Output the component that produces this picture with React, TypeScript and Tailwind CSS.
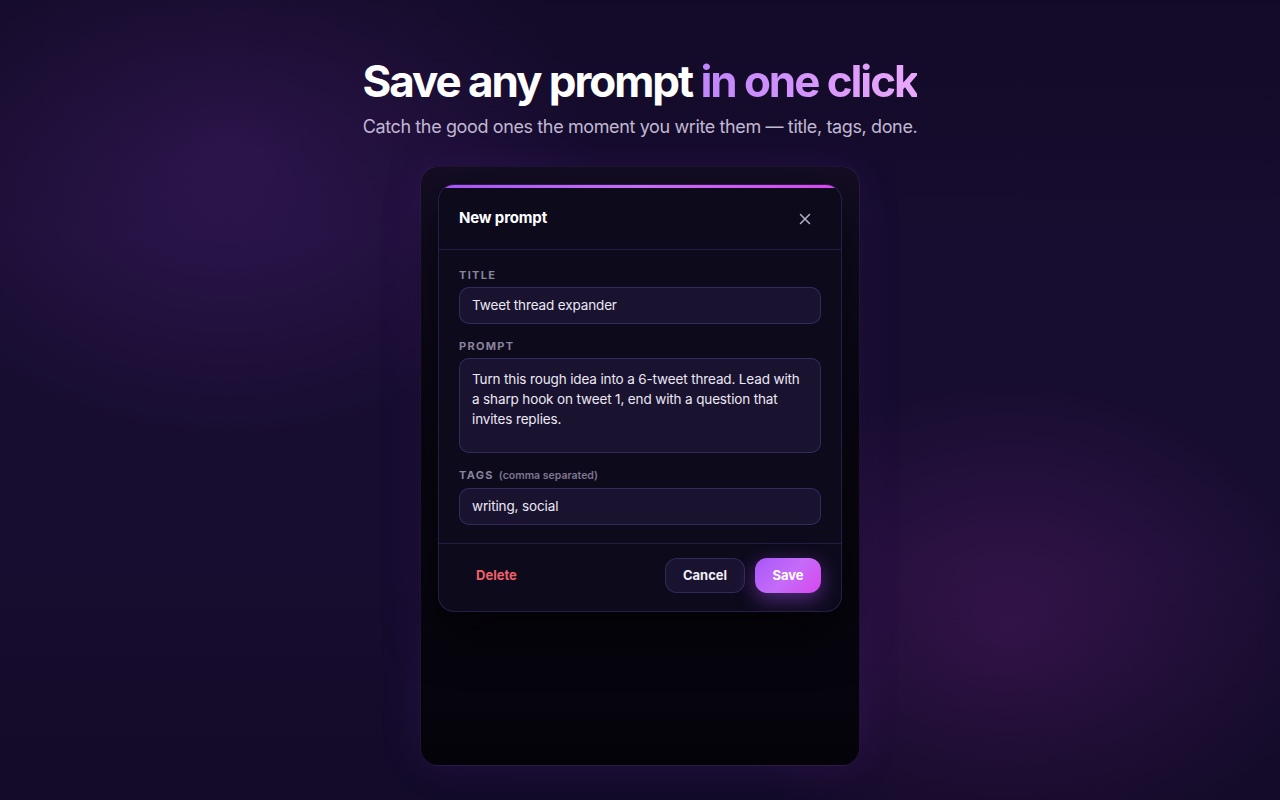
import React from "react";

export default function App() {
  return (
    <div
      className="relative w-full h-[800px] overflow-hidden flex flex-col items-center"
      style={{ fontFamily: "Inter, 'Noto Sans', sans-serif" }}
    >
      <div className="absolute inset-0 bg-[#170d30]" />
      <div className="absolute inset-0 bg-[radial-gradient(ellipse_520px_420px_at_230px_150px,rgba(70,30,110,0.55),transparent_70%)]" />
      <div className="absolute inset-0 bg-[radial-gradient(ellipse_440px_360px_at_1010px_630px,rgba(80,25,100,0.55),transparent_70%)]" />
      <div className="absolute inset-0 bg-[linear-gradient(180deg,rgba(10,6,24,0.35),transparent_30%,transparent_70%,rgba(10,6,24,0.3))]" />

      <div className="relative flex flex-col items-center pt-[56px]">
        <h1 className="text-[44px] leading-[50px] font-bold tracking-[-0.047em] text-white">
          Save any prompt{" "}
          <span className="bg-[linear-gradient(90deg,#c084fc,#e9a8fb)] bg-clip-text text-transparent">
            in one click
          </span>
        </h1>
        <p className="mt-[8px] text-[18px] leading-[26px] tracking-[-0.021em] text-[#c1b8d3]">
          Catch the good ones the moment you write them — title, tags, done.
        </p>

        <div className="mt-[26px] w-[440px] h-[600px] rounded-[18px] border border-[rgba(150,100,230,0.18)] bg-[linear-gradient(180deg,#140d24_0%,#0a0714_40%,#05030a_100%)] p-[17px] shadow-[0_0_40px_rgba(120,50,200,0.15)]">
          <div className="relative rounded-[16px] border border-[rgba(130,100,220,0.22)] bg-[#0d0a1c] overflow-hidden shadow-[0_20px_50px_rgba(0,0,0,0.6)]">
            <div className="h-[3px] bg-[linear-gradient(90deg,#a855f7,#c76cf7,#d946ef)]" />
            <div className="flex items-center justify-between h-[62px] px-[20px] border-b border-[rgba(120,95,210,0.22)]">
              <span className="text-[15px] font-bold tracking-[-0.01em] text-white">New prompt</span>
              <button className="w-[24px] h-[24px] flex items-center justify-center text-[#b7b0c9] mr-[4px]">
                <svg width="12" height="12" viewBox="0 0 12 12" fill="none" stroke="currentColor" strokeWidth="1.5" strokeLinecap="round">
                  <path d="M1.5 1.5L10.5 10.5M10.5 1.5L1.5 10.5" />
                </svg>
              </button>
            </div>

            <div className="px-[20px] pt-[18px] pb-[18px] flex flex-col">
              <label className="text-[11px] leading-[14px] font-bold tracking-[0.12em] text-[#8a839c]">TITLE</label>
              <div className="mt-[5px] h-[37px] rounded-[10px] border border-[rgba(120,95,210,0.3)] bg-[#19132f] flex items-center px-[12px] text-[13.5px] tracking-[-0.01em] text-[#ece8f5]">
                Tweet thread expander
              </div>

              <label className="mt-[15px] text-[11px] leading-[14px] font-bold tracking-[0.12em] text-[#8a839c]">PROMPT</label>
              <div className="mt-[5px] h-[95px] rounded-[10px] border border-[rgba(120,95,210,0.3)] bg-[#19132f] px-[12px] pt-[10px] text-[13.5px] tracking-[-0.01em] leading-[20px] text-[#ece8f5]">
                Turn this rough idea into a 6-tweet thread. Lead with a sharp hook on tweet 1, end with a question that invites replies.
              </div>

              <label className="mt-[15px] text-[11px] leading-[14px] font-bold tracking-[0.12em] text-[#8a839c] flex items-baseline">
                TAGS
                <span className="ml-[5px] text-[10.5px] font-semibold tracking-normal text-[#7d7690]">(comma separated)</span>
              </label>
              <div className="mt-[5px] h-[37px] rounded-[10px] border border-[rgba(120,95,210,0.3)] bg-[#19132f] flex items-center px-[12px] text-[13.5px] tracking-[-0.01em] text-[#ece8f5]">
                writing, social
              </div>
            </div>

            <div className="border-t border-[rgba(120,95,210,0.22)] pt-[14px] pb-[18px] px-[20px] flex items-center justify-between">
              <button className="h-[35px] px-[17px] rounded-[12px] text-[13px] font-bold text-[#f0616a]">Delete</button>
              <div className="flex items-center gap-[10px]">
                <button className="h-[35px] w-[80px] rounded-[12px] border border-[rgba(120,95,210,0.28)] bg-[#19132f] text-[13px] font-bold text-[#f1eef8]">
                  Cancel
                </button>
                <button className="h-[35px] w-[66px] rounded-[12px] bg-[linear-gradient(135deg,#a855f7,#c46cf8,#d946ef)] text-[13px] font-bold text-white shadow-[0_6px_20px_rgba(168,85,247,0.45)]">
                  Save
                </button>
              </div>
            </div>
          </div>
        </div>
      </div>
    </div>
  );
}
